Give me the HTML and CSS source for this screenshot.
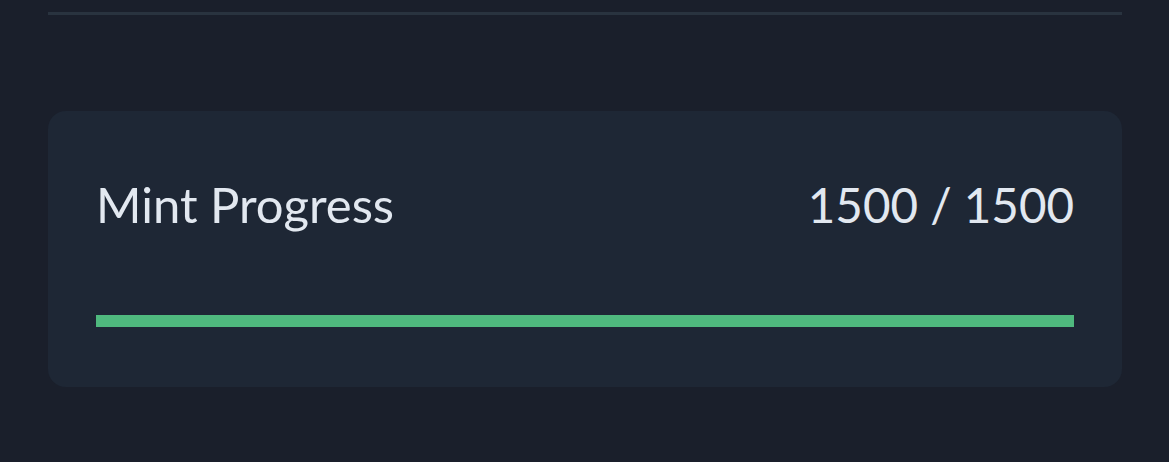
FILE: index.html
```html
<!DOCTYPE html>
<html>
<head>
<meta charset="utf-8">
<link rel="stylesheet" href="styles.css">
</head>
<body>
<div class="page">
  <hr class="divider">
  <section class="card">
    <div class="row">
      <span class="label">Mint Progress</span>
      <span class="count">1500 / 1500</span>
    </div>
    <div class="track"><div class="fill" style="width:100%"></div></div>
  </section>
</div>
</body>
</html>
```
FILE: styles.css
```css
html, body {
  margin: 0;
  padding: 0;
  background: #1a1f2b;
  height: 100%;
}
.page {
  padding: 12px 47px 0 48px;
  font-family: Lato, "Noto Sans", sans-serif;
  color: #e2e8f0;
}
.divider {
  margin: 0;
  border: 0;
  height: 3px;
  background: #29333f;
}
.card {
  margin-top: 96px;
  background: #1e2735;
  border-radius: 18px;
  padding: 48px 48px 60px 48px;
}
.row {
  display: flex;
  justify-content: space-between;
  align-items: baseline;
  font-size: 49px;
  line-height: 90px;
  font-weight: 400;
}
.count {
  font-size: 47.5px;
}
.track {
  margin-top: 65px;
  height: 12px;
  background: #1e2735;
}
.fill {
  height: 100%;
  background: #4fb97e;
}
```
